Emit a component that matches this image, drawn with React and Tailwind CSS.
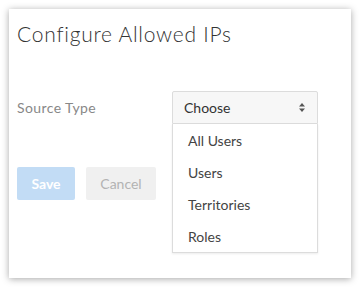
import React from 'react'

const OPTIONS = ['All Users', 'Users', 'Territories', 'Roles']

export default function App() {
  return (
    <div className="w-[360px] h-[288px] bg-white p-[9px] font-['Lato',sans-serif]">
      <div className="h-[269px] w-[342px] bg-white shadow-[0_1px_7px_rgba(0,0,0,0.35)] pl-[8px] pt-[12px]">
        <h1 className="text-[21px] leading-[26px] font-light text-[#333] tracking-[0.75px]">
          Configure Allowed IPs
        </h1>

        {/* Source type row */}
        <div className="mt-[44px] flex items-center">
          <span className="w-[155px] text-[14px] text-[#888] tracking-[0.4px]">Source Type</span>
          <div className="relative">
            <div className="w-[146px] h-[33px] flex items-center justify-between pl-[11px] pr-[12px] bg-[#f7f7f7] border border-[#dcdcdc] rounded-t-[2px] text-[14px] text-[#333]">
              <span>Choose</span>
              <svg width="6" height="9" viewBox="0 0 6 9">
                <path d="M3 0 L6 3.5 L0 3.5 Z" fill="#555" />
                <path d="M3 9 L6 5.5 L0 5.5 Z" fill="#555" />
              </svg>
            </div>
            {/* open menu */}
            <ul className="absolute left-0 top-[33px] w-[146px] bg-white border border-t-0 border-[#dcdcdc] shadow-[0_1px_2px_rgba(0,0,0,0.08)] z-10">
              {OPTIONS.map((o) => (
                <li key={o} className="h-8 flex items-center pl-[15px] text-[14px] text-[#444]">
                  {o}
                </li>
              ))}
            </ul>
          </div>
        </div>

        {/* Actions */}
        <div className="mt-[43px] flex gap-[11px]">
          <button className="w-[58px] h-[33px] rounded-[2px] bg-[#c2dcf5] text-white text-[14px] font-bold">
            Save
          </button>
          <button className="w-[70px] h-[33px] rounded-[2px] bg-[#f0f0f0] text-[#b3b3b3] text-[14px]">
            Cancel
          </button>
        </div>
      </div>
    </div>
  )
}
